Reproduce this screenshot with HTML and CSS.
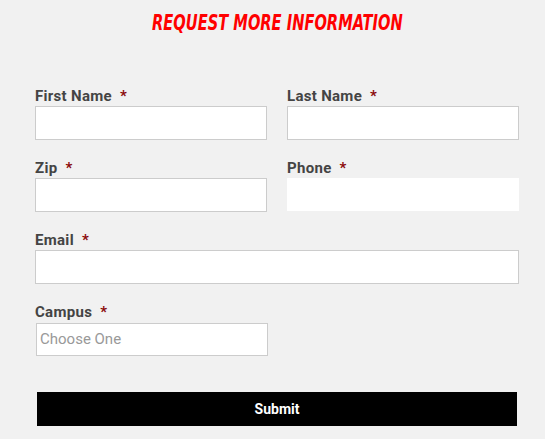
FILE: index.html
```html
<!DOCTYPE html>
<html>
<head>
<meta charset="utf-8">
<link rel="stylesheet" href="styles.css">
</head>
<body>
<div class="page">
  <h1 class="title"><span class="title-text">REQUEST MORE INFORMATION</span></h1>
  <form class="form">
    <div class="field">
      <label class="label">First Name <span class="req">*</span></label>
      <input class="input" type="text">
    </div>
    <div class="field">
      <label class="label">Last Name <span class="req">*</span></label>
      <input class="input" type="text">
    </div>
    <div class="field">
      <label class="label">Zip <span class="req">*</span></label>
      <input class="input" type="text">
    </div>
    <div class="field">
      <label class="label">Phone <span class="req">*</span></label>
      <input class="input input-plain" type="text">
    </div>
    <div class="field wide">
      <label class="label">Email <span class="req">*</span></label>
      <input class="input" type="text">
    </div>
    <div class="field">
      <label class="label">Campus <span class="req">*</span></label>
      <div class="select">Choose One</div>
    </div>
    <div class="actions wide">
      <button class="submit" type="button">Submit</button>
    </div>
  </form>
</div>
</body>
</html>
```
FILE: styles.css
```css
* { box-sizing: border-box; }
html, body { margin: 0; padding: 0; }
body {
  background: #f1f1f1;
  font-family: Roboto, "Liberation Sans", sans-serif;
  width: 545px;
  height: 439px;
  overflow: hidden;
}
.page { padding-top: 10px; }
.title {
  margin: 0;
  text-align: center;
  font-family: "DejaVu Sans Condensed", "DejaVu Sans", sans-serif;
  font-style: italic;
  font-weight: 700;
  font-size: 22px;
  line-height: 26px;
  color: #ff0000;
  padding-left: 9px;
  white-space: nowrap;
}
.title-text {
  display: inline-block;
  transform: scaleX(0.74);
  transform-origin: center;
}
.form {
  display: grid;
  grid-template-columns: 232px 232px;
  column-gap: 20px;
  row-gap: 18px;
  padding: 0 26px 0 35px;
  margin-top: 50px;
}
.field { display: flex; flex-direction: column; }
.wide { grid-column: 1 / span 2; }
.label {
  font-size: 15px;
  font-weight: 700;
  line-height: 20px;
  letter-spacing: 0.3px;
  color: #444;
}
.req { color: #8b0a0a; margin-left: 4px; }
.input {
  height: 34px;
  border: 1px solid #cccccc;
  background: #fff;
  margin: 0;
  padding: 0 4px;
  font: inherit;
}
.input-plain { border: none; height: 33px; }
.select {
  width: 232px;
  height: 33px;
  margin: 1px 0 0 1px;
  border: 1px solid #cccccc;
  background: #fff;
  padding-left: 3px;
  font-size: 15px;
  line-height: 31px;
  color: #999;
}
.actions { margin-top: 18px; padding: 0 2px; }
.submit {
  display: block;
  width: 480px;
  height: 34px;
  background: #000;
  color: #fff;
  border: none;
  font-family: Roboto, "Liberation Sans", sans-serif;
  font-size: 14px;
  font-weight: 700;
  cursor: pointer;
}
```
